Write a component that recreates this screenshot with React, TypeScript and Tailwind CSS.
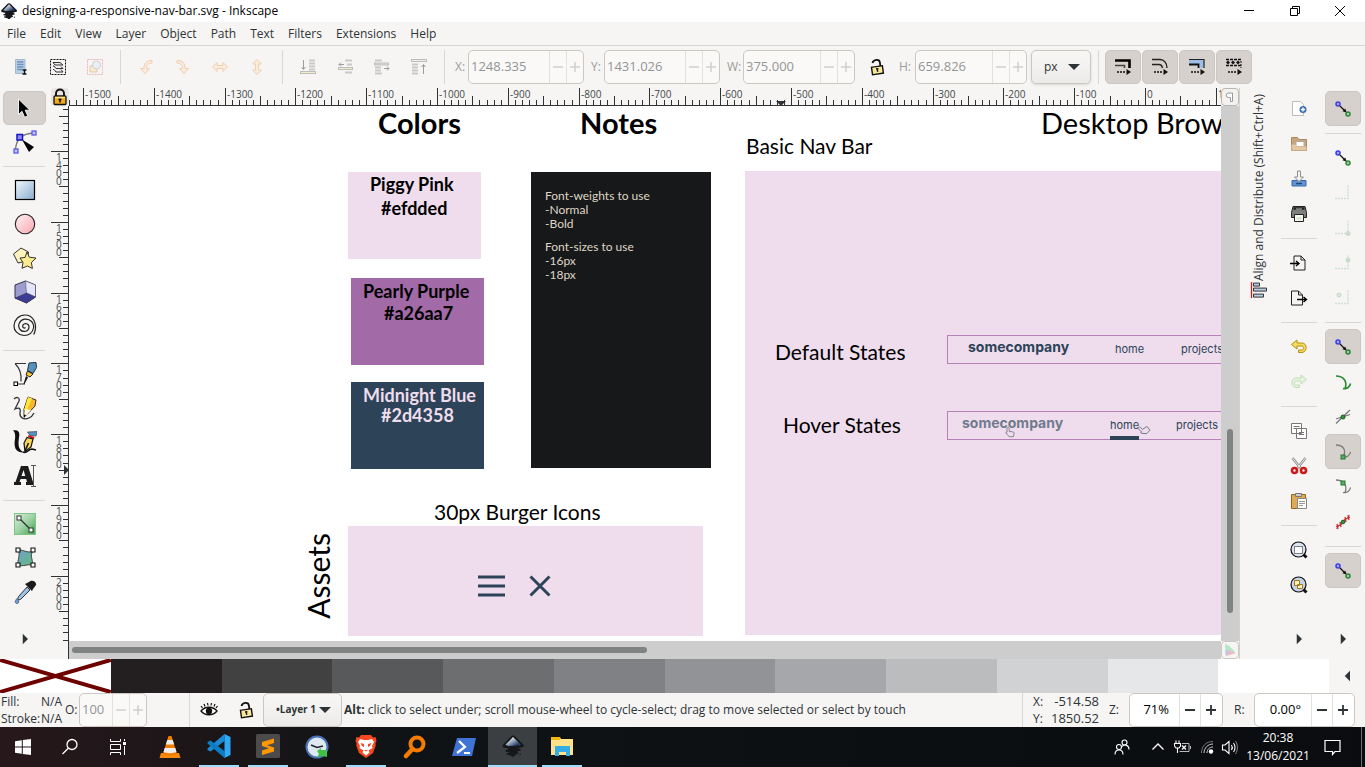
import type { ReactNode } from "react";

const ui = "font-['Open_Sans','Noto_Sans',sans-serif]";
const art = "font-['Lato','Noto_Sans',sans-serif]";
const brand = "font-['Inter','Open_Sans',sans-serif]";

type Kids = { children?: ReactNode };

function Icon({ size = 24, box = 24, children }: Kids & { size?: number; box?: number }) {
  return (
    <svg width={size} height={size} viewBox={`0 0 ${box} ${box}`} fill="none" aria-hidden="true" className="shrink-0">
      {children}
    </svg>
  );
}

/* ---------- shared icons ---------- */

function InkscapeLogo({ size }: { size: number }) {
  return (
    <Icon size={size}>
      <defs>
        <linearGradient id="ink" x1="0" y1="0" x2="1" y2="1">
          <stop offset="0.2" stopColor="#f4f6fa" />
          <stop offset="0.5" stopColor="#8d9bb0" />
          <stop offset="0.8" stopColor="#25406e" />
        </linearGradient>
      </defs>
      <path d="M12 1.500c.9 0 1.500.4 2.200 1.100l7.800 7.600c1.400 1.400.8 2.600-1 3.100-1.500.4-3 .4-3.200 1.100-.2.6 2.400 1 2.200 1.900-.2.900-3.500.600-3.700 1.400-.2.700 1.500 1 1 1.900-.4.800-2.100.300-2.600 1-.5.800-1.500 2.200-2.800 2.200-1.200 0-1.700-1-2.800-1.500-1-.5-2.800-.1-3-1.100-.1-.8 2-.900 1.900-1.700-.1-.8-3.500-.5-3.700-1.600-.2-1 3.100-1.200 2.900-2-.3-.8-3.800-.5-5.300-1.800-.8-.8-.4-1.900.4-2.700l7.500-7.700C10.500 1.900 11.100 1.500 12 1.500z" fill="#15171a" />
      <path d="M12 3l7.500 7.300c.8.8-.8 1.500-2.800 1-1.500-.4-2 .8-3.300.4-1.200-.4-1.700.9-2.900.3-1.200-.5-2.200.7-3.500-.1-1-.6-2.700-.4-2.300-1.300z" fill="url(#ink)" />
      <path d="M5.500 19.800l2 .4M18.500 20.500l1.500-.5M13 15.500h3" stroke="#15171a" strokeWidth="1.300" />
    </Icon>
  );
}

function Triangle({ dir }: { dir: "right" | "left" | "down" }) {
  const paths = { right: "M9 5l7 7-7 7z", left: "M16 5l-7 7 7 7z", down: "M4 8h16l-8 8z" };
  return (
    <Icon size={18}>
      <path d={paths[dir]} fill="#2e3436" />
    </Icon>
  );
}

function Padlock({ open, gold }: { open?: boolean; gold?: boolean }) {
  return (
    <Icon size={18} box={18}>
      {open ? (
        <g transform="rotate(-8 9 9)">
          <path d="M5 4.500C6.500 1 12.500 1 12.500 5v4" stroke="#111" strokeWidth="1.800" />
          <rect x="3.500" y="8.500" width="11" height="7.500" fill="#f8e89a" stroke="#111" strokeWidth="1.400" />
          <path d="M9 10v4M7.800 11h2.400" stroke="#222" strokeWidth="1.500" />
        </g>
      ) : (
        <g>
          <path d="M5 8V5.500a4 4 0 018 0V8" stroke="#111" strokeWidth="1.900" />
          <rect x="3" y="8" width="12" height="8.500" rx="1" fill={gold ? "#f0a91c" : "#eee"} stroke="#111" strokeWidth="1.300" />
          <path d="M4 9.500h10" stroke="#ffe59a" strokeWidth="1.500" />
          <path d="M9 10.500v4M7.500 11.500h3" stroke="#111" strokeWidth="1.500" />
        </g>
      )}
    </Icon>
  );
}

/* ---------- top tool bar icons ---------- */

const selectIcons: ReactNode[] = [
  <Icon key="all" size={18} box={18}>
    <path d="M3.500 1.500h9.500v14H3.500z" fill="#b9d0e8" stroke="#a9b9c9" />
    <path d="M5 4h6.500M5 6.500h6.500M5 9h6.500M5 11.500h5" stroke="#6f93ba" strokeWidth="1.500" />
    <path d="M10.500 12h4M10.500 16h4M12.500 12.500v3" stroke="#111" strokeWidth="1.300" />
  </Icon>,
  <Icon key="layers" size={18} box={18}>
    <rect x="1.500" y="1.500" width="15" height="15" stroke="#111" strokeDasharray="2 1" />
    <path d="M4 4.500h7l3 2.500H6zM4 8h1l2 2.500h7L12 8.500M4 11.500h1l2 2.500h7l-2-2.500" fill="#eee" stroke="#333" />
  </Icon>,
  <Icon key="none" size={18} box={18}>
    <rect x="1.500" y="1.500" width="15" height="15" stroke="#efb4b4" strokeDasharray="2 1" />
    <path d="M4 8h7v6H4z" fill="#f8ecd0" stroke="#dfc9a9" />
    <circle cx="10.500" cy="7" r="4" fill="#eceff3" stroke="#ccd0d4" />
  </Icon>,
];

function Orange({ d }: { d: string }) {
  return (
    <Icon size={18} box={18}>
      <path d={d} fill="#faebdd" stroke="#f0ceb0" strokeLinejoin="round" />
    </Icon>
  );
}

const turnIcons: ReactNode[] = [
  <Orange key="l" d="M15 2.500c-6 0-8 3-8 8H3.500L8 15.500l4.500-5H9.500c0-3 1-5 5.500-5.500z" />,
  <Orange key="r" d="M3 2.500c6 0 8 3 8 8h3.500L10 15.500l-4.500-5h3C8.500 7.500 7.500 5.500 3 5z" />,
  <Orange key="h" d="M1.500 9L6 4.500v3h6v-3L16.500 9 12 13.500v-3H6v3z" />,
  <Orange key="v" d="M9 1.500L4.500 6h3v6h-3L9 16.500l4.500-4.500h-3V6h3z" />,
];

const raiseIcons: ReactNode[] = [
  <Icon key="a" size={18} box={18}>
    <path d="M4.500 2v9M2.500 9l2 2.500L6.500 9" stroke="#9c9c9a" />
    <path d="M10 2.500h6M10 5.500h6M10 8.500h6M10 11.500h6" stroke="#c9c9c7" strokeWidth="2" />
    <rect x="1.500" y="13.500" width="15" height="2" fill="#f2ecc8" stroke="#bdbdb9" />
  </Icon>,
  <Icon key="b" size={18} box={18}>
    <path d="M3 6.500h5M5 4.500l-2 2 2 2" stroke="#9c9c9a" />
    <path d="M9 2.500h7M11 6.500h5M9 14.500h7" stroke="#c9c9c7" strokeWidth="2" />
    <rect x="2.500" y="9.500" width="14" height="2" fill="#f2ecc8" stroke="#bdbdb9" />
  </Icon>,
  <Icon key="c" size={18} box={18}>
    <path d="M11 10.500h5M14 8.500l2 2-2 2" stroke="#9c9c9a" />
    <path d="M2 2.500h7M2 9.500h6M2 12.500h6M2 15.500h7" stroke="#c9c9c7" strokeWidth="2" />
    <rect x="1.500" y="5" width="14" height="2" fill="#ddd" stroke="#bdbdb9" />
  </Icon>,
  <Icon key="d" size={18} box={18}>
    <path d="M13.500 16V7M11.500 9l2-2.500 2 2.500" stroke="#9c9c9a" />
    <path d="M2 6.500h6M2 9.500h6M2 12.500h6M2 15.500h6" stroke="#c9c9c7" strokeWidth="2" />
    <rect x="1.500" y="1.500" width="15" height="2" fill="#eee" stroke="#bdbdb9" />
  </Icon>,
];

const affectIcons: { name: string; icon: ReactNode }[] = [
  {
    name: "Scale stroke width",
    icon: (
      <g>
        <path d="M1 2.500h14.500V10" stroke="#000" strokeWidth="2.600" />
        <path d="M1 7.500h9.500V10" stroke="#444" strokeWidth="1.600" />
      </g>
    ),
  },
  {
    name: "Scale rounded corners",
    icon: (
      <g stroke="#222" strokeWidth="1.400">
        <path d="M1 1.500h8c4 0 7 3.500 7 8.500" />
        <path d="M1 6.500h7c2 0 3 1 3.500 3.500" />
      </g>
    ),
  },
  {
    name: "Move gradients",
    icon: (
      <g>
        <path d="M1 2h15v8h-5V7H1z" fill="#9dbfe6" />
        <path d="M1 1.500h15V10" stroke="#222" strokeWidth="1.200" />
        <path d="M1 6.500h9.500V10" stroke="#111" strokeWidth="1.800" />
      </g>
    ),
  },
  {
    name: "Move patterns",
    icon: (
      <g>
        <path d="M1 1.500h16M1 7.500h16" stroke="#111" strokeWidth="1.400" strokeDasharray="3 1" />
        <path d="M3 2.500L5 4.500 3 6.500 1 4.500zM8 2.500l2 2-2 2-2-2zM13 2.500l2 2-2 2-2-2z" fill="#111" />
        <path d="M16 3v7" stroke="#111" strokeDasharray="2 1" />
      </g>
    ),
  },
];

/* ---------- left tool box ---------- */

const tools: ({ name: string; icon: ReactNode } | null)[] = [
  {
    name: "Select",
    icon: <path d="M5.500 3v15.500L9 15.300l2.600 6 3.200-1.400-2.600-5.700h4.700z" fill="#000" stroke="#fff" strokeWidth=".9" />,
  },
  {
    name: "Edit nodes",
    icon: (
      <g>
        <path d="M2.500 21C2.500 10 8 3.500 21 3" stroke="#777" strokeWidth="1.300" />
        <rect x="4" y="4.500" width="5.500" height="5.500" fill="#8c8cf5" stroke="#1414c8" strokeWidth="1.500" />
        <rect x="19" y="1" width="4" height="4" fill="#c4c4fa" stroke="#5a5ae6" strokeWidth="1.300" />
        <rect x="1" y="19" width="4" height="4" fill="#c4c4fa" stroke="#5a5ae6" strokeWidth="1.300" />
        <path d="M9 9.500l12 7.500-5 5z" fill="#000" />
      </g>
    ),
  },
  null,
  {
    name: "Rectangle",
    icon: (
      <g>
        <defs>
          <linearGradient id="gr" x1="0" y1="0" x2="1" y2="1">
            <stop stopColor="#f2f7fc" />
            <stop offset="1" stopColor="#88add2" />
          </linearGradient>
        </defs>
        <rect x="2.500" y="2.500" width="19" height="19" fill="url(#gr)" stroke="#000" strokeWidth="1.200" />
      </g>
    ),
  },
  {
    name: "Ellipse",
    icon: (
      <g>
        <defs>
          <linearGradient id="gc" x1="0" y1="0" x2="1" y2="1">
            <stop stopColor="#fff5f6" />
            <stop offset="1" stopColor="#f9a5ae" />
          </linearGradient>
        </defs>
        <circle cx="12" cy="12" r="9.700" fill="url(#gc)" stroke="#222" strokeWidth="1.100" />
      </g>
    ),
  },
  {
    name: "Star",
    icon: (
      <g strokeLinejoin="round" stroke="#333">
        <path d="M8 2l7.500 4-1.500 9-9 2-4.500-9z" fill="#fdf3bd" />
        <path d="M14 6l2.300 5.200 6.700.800-4.600 4.500 1 6-5-2.500-5.400 2.300 1-5.800-3-4.500 5-.5z" fill="#fbec8f" />
      </g>
    ),
  },
  {
    name: "3D box",
    icon: (
      <g stroke="#334" strokeLinejoin="round">
        <path d="M12.500 1l10 4v12l-9 6-11.500-5V5z" fill="#9c9ccf" />
        <path d="M12.500 1l10 4v12l-9-4z" fill="#e4e4fb" strokeWidth=".4" />
        <path d="M2 18l11.500-5 9 4-9 6z" fill="#3c3c94" strokeWidth=".4" />
      </g>
    ),
  },
  {
    name: "Spiral",
    icon: (
      <path
        d="M12.500 13.500c-1.500 1.500-3.500-.500-2.500-2.500 1.500-2.500 6-1.500 6 2 0 4.500-6 6-9 2.500-3-4-.500-9.500 4.500-10.300 6-.700 10 4 9 8.800-1 5-5 7.500-9.500 7.500C4.500 21 .8 16.500 1 11.500 1.500 5.500 6 1 12 1c8 0 12 8 10 16-.4 1.500-.8 2.500-1.300 3.500"
        stroke="#222"
        strokeWidth="1.200"
      />
    ),
  },
  null,
  {
    name: "Pen",
    icon: (
      <g>
        <path d="M2 1.500h11M2 1.500c4 4 7 9 6 18M3 22h9" stroke="#333" strokeWidth="1.200" />
        <rect x="1" y="20" width="3.500" height="3.500" fill="#fff" stroke="#000" />
        <path d="M16 1l7-.5.5 5-3.500 6-5.500-3z" fill="#5793bd" stroke="#234" />
        <path d="M14.500 9l5.500 3-3 3-4-2z" fill="#f5c433" stroke="#222" />
        <path d="M13 14l2 1.500L11.500 22h-1z" fill="#111" />
      </g>
    ),
  },
  {
    name: "Pencil",
    icon: (
      <g>
        <path d="M1 3c3-3 6-1 5 2l-4 8c4-2 6-1 5 4-.5 5 4 7 9 5 3-1 4-3 5-5" stroke="#333" strokeWidth="1.300" />
        <path d="M15 1l8 3-1 6-7.500 8L11 21V13z" fill="#f9b62b" stroke="#333" />
        <path d="M15 1l4 1.500L14 14l-3 0z" fill="#ffe83a" />
        <path d="M12 13l6 1-4 4.500L11 21z" fill="#fff8e0" />
        <path d="M11 18.500l2 .5-2 3z" fill="#000" />
      </g>
    ),
  },
  {
    name: "Calligraphy",
    icon: (
      <g>
        <path d="M0 .5c6-1 7 2 6 7-1 7-1 12 5 15C1 23 1 15 2 9c.5-4 0-7-2-8.500z" fill="#111" />
        <path d="M10 22c4 2 5-3 9-3l4 1" stroke="#111" strokeWidth="1.600" />
        <path d="M14.500 2L24 1.500 23 6l-6-.5z" fill="#5793bd" stroke="#234" strokeWidth=".6" />
        <path d="M15.500 5l6 2-.6 2-6-2z" fill="#d21717" />
        <path d="M14 7.500l6 1.500-2 8-6 4.500L11 13z" fill="#f9d85a" stroke="#111" strokeWidth="1.200" />
        <path d="M12 21l3.500-8" stroke="#111" strokeWidth="1.500" />
      </g>
    ),
  },
  {
    name: "Text",
    icon: (
      <g>
        <path
          d="M1 18h1.500L8 2h7l5 16h1v3h-8v-3h1l-.8-3H7.500l-1 3H8v3H1zM8.500 12h3.800l-1.800-6z"
          fill="#1c1c1c"
          fillRule="evenodd"
        />
        <path d="M18 1.500h5M18 22.500h5M20.500 1.500v21" stroke="#555" />
      </g>
    ),
  },
  null,
  {
    name: "Gradient",
    icon: (
      <g>
        <defs>
          <linearGradient id="gg" x1="0" y1="0" x2="1" y2="1">
            <stop stopColor="#d9f0dc" />
            <stop offset=".5" stopColor="#9fd2a6" />
            <stop offset=".9" stopColor="#4fae5c" />
          </linearGradient>
        </defs>
        <rect x="1.500" y="1.500" width="21" height="21" fill="url(#gg)" stroke="#7fc489" />
        <path d="M7 7l10 10" stroke="#333" strokeWidth="1.300" />
        <rect x="4" y="4" width="4" height="4" fill="#fff" stroke="#333" />
        <rect x="16" y="16" width="4" height="4" fill="#fff" stroke="#333" />
      </g>
    ),
  },
  {
    name: "Mesh",
    icon: (
      <g>
        <defs>
          <linearGradient id="gm" x1="0" y1="0" x2="1" y2="1">
            <stop stopColor="#6da2d0" />
            <stop offset="1" stopColor="#64bb7a" />
          </linearGradient>
        </defs>
        <path d="M5 4c5-1 9 4 15 1-4 5 1 10-1 14-5-1-9 2-14 0-1-5 3-10 0-15z" fill="url(#gm)" stroke="#444" />
        <path d="M3 2h4v4H3zM18 2h4v4h-4zM3 17h4v4H3zM18 17h4v4h-4z" fill="#fff" stroke="#111" strokeWidth="1.100" />
      </g>
    ),
  },
  {
    name: "Dropper",
    icon: (
      <g>
        <path d="M16 2c3-3 8 0 7 3l-3 4-1 2-7-7 2-1z" fill="#1b1b1b" />
        <path d="M14 7l3 3L8 19c-1 1-3 1-3 0s0-2 1-3z" fill="#9dc0e4" stroke="#333" />
        <path d="M4 18.500c2 2 2.500 5 0 5s-2-3 0-5z" fill="#6b9fd4" stroke="#346" strokeWidth=".7" />
      </g>
    ),
  },
];

/* ---------- command column ---------- */

const page = "M4 2h7l4 4v10H4z";

const commands: ({ name: string; icon: ReactNode } | null)[] = [
  {
    name: "New document",
    icon: (
      <g>
        <path d="M2.500 1.500h8l3 3v11h-11z" fill="#fff" stroke="#bdbdba" />
        <circle cx="13" cy="9.500" r="3.500" fill="#3f6fae" />
        <path d="M13 7.500v4M11 9.500h4" stroke="#fff" strokeWidth="1.300" />
      </g>
    ),
  },
  {
    name: "Open",
    icon: (
      <g>
        <path d="M1.500 2.500h6l1.500 2h7.500v11h-15z" fill="#c7a67c" stroke="#a98a62" />
        <path d="M6 6.500h8v5H6z" fill="#fff" stroke="#b3ab9f" />
        <path d="M1.500 9.500h4l1.500 2h9.500v4h-15z" fill="#e3c8a2" />
      </g>
    ),
  },
  {
    name: "Save",
    icon: (
      <g>
        <path d="M2 10.500h14v5.500H2z" fill="#5f95d4" stroke="#3a68a6" />
        <path d="M7.500 1h3v6h3L9 11.500 4.500 7h3z" fill="#f4f4f4" stroke="#8e8e8e" />
        <path d="M6 13.500h6" stroke="#24497e" strokeWidth="1.500" />
      </g>
    ),
  },
  {
    name: "Print",
    icon: (
      <g>
        <path d="M3 1.500h12l1.500 6v5h-15v-5z" fill="#7c807d" stroke="#222" />
        <path d="M3.500 3.500h11" stroke="#222" strokeWidth="2.500" />
        <path d="M6 4h6" stroke="#bbb" />
        <path d="M4.500 9.500h9v7h-9z" fill="#f7f7f2" stroke="#222" />
        <path d="M6.500 13.500h5" stroke="#cfe5c2" strokeWidth="2" />
      </g>
    ),
  },
  null,
  {
    name: "Import",
    icon: (
      <g>
        <path d={page} fill="#f4f4f2" stroke="#222" />
        <path d="M11 2v4h4" stroke="#222" />
        <path d="M0 9.500h8M6 7l3 2.500L6 12" stroke="#000" strokeWidth="1.400" />
      </g>
    ),
  },
  {
    name: "Export",
    icon: (
      <g>
        <path d="M1.500 2h7l4 4v10h-11z" fill="#f4f4f2" stroke="#222" />
        <path d="M8.500 2v4h4" stroke="#222" />
        <path d="M7 10.500h9M13.500 8l3 2.500-3 2.500" stroke="#000" strokeWidth="1.400" />
      </g>
    ),
  },
  null,
  {
    name: "Undo",
    icon: <path d="M1.500 6.500L7 2v3h5c5.500 0 5.500 9 0 9.500H8.500V12H12c2 0 2-4 0-4H7v3z" fill="#f6dc5b" stroke="#b98f12" strokeLinejoin="round" />,
  },
  {
    name: "Redo",
    icon: <path d="M16.500 6.500L11 2v3H6c-5.500 0-5.500 9 0 9.500h3.500V12H6C4 12 4 8 6 8h5v3z" fill="#e6f3de" stroke="#c3ddb6" strokeLinejoin="round" />,
  },
  null,
  {
    name: "Copy",
    icon: (
      <g stroke="#777">
        <path d="M1.500 1.500h10v10h-10zM6.500 6.500h10v10h-10z" fill="#fff" />
        <path d="M3.500 4.500h6M3.500 6.500h3M9 10.500h5M9 12.500h5" />
      </g>
    ),
  },
  {
    name: "Cut",
    icon: (
      <g>
        <path d="M2.500 1l8 10M15.500 1l-8 10" stroke="#888" strokeWidth="2.400" />
        <path d="M2.500 1l8 10M15.500 1l-8 10" stroke="#eee" strokeWidth="1" />
        <circle cx="4.500" cy="13.500" r="2.500" stroke="#cc1a1a" strokeWidth="2.600" />
        <circle cx="13.500" cy="13.500" r="2.500" stroke="#cc1a1a" strokeWidth="2.600" />
      </g>
    ),
  },
  {
    name: "Paste",
    icon: (
      <g>
        <path d="M1.500 2.500h14v14h-14z" fill="#e3aa56" stroke="#95651b" />
        <path d="M5.500 1.500h6v3h-6z" fill="#ccc" stroke="#777" />
        <path d="M7.500 6.500h9v10h-9z" fill="#fff" stroke="#888" />
        <path d="M9 9.500h6M9 11.500h6M9 13.500h4" stroke="#999" />
      </g>
    ),
  },
  null,
  {
    name: "Zoom selection",
    icon: (
      <g>
        <circle cx="8.500" cy="8.500" r="7.500" fill="#dbe5f2" stroke="#111" strokeWidth="1.200" />
        <rect x="4.500" y="5.500" width="8" height="7" fill="#fff" stroke="#111" strokeDasharray="1 1" />
        <path d="M13.500 13.500l3 3" stroke="#111" strokeWidth="3" />
      </g>
    ),
  },
  {
    name: "Zoom drawing",
    icon: (
      <g>
        <circle cx="8.500" cy="8.500" r="7.500" fill="#c5d3ea" stroke="#111" strokeWidth="1.200" />
        <path d="M4.500 4.500h5v5h-5zM7.500 8.500h5v4h-5z" fill="#fff3c4" stroke="#a67a1c" />
        <path d="M13.500 13.500l3 3" stroke="#111" strokeWidth="3" />
      </g>
    ),
  },
];

/* ---------- snap column ---------- */

const nodePair = (
  <g>
    <circle cx="4" cy="4" r="2" fill="#a6a6fa" stroke="#3b3bea" strokeWidth="1.500" />
    <circle cx="14" cy="14" r="2" fill="#a9c8ab" stroke="#2f8436" strokeWidth="1.500" />
    <path d="M6 6l5 5" stroke="#111" strokeWidth="1.300" />
    <path d="M12.500 12.500l-4-1.200 2.800-2.800z" fill="#111" />
  </g>
);
const faintCorner = <path d="M1 14.500h13V1" stroke="#cfe0d3" strokeWidth="1.500" strokeDasharray="2 1" />;

const snaps: ({ name: string; icon: ReactNode; on?: boolean } | null)[] = [
  { name: "Enable snapping", icon: nodePair, on: true },
  null,
  { name: "Snap bounding boxes", icon: nodePair },
  { name: "Snap box edges", icon: faintCorner },
  {
    name: "Snap box corners",
    icon: (
      <g>
        {faintCorner}
        <circle cx="14" cy="14.500" r="2.500" fill="#cbdccf" />
      </g>
    ),
  },
  {
    name: "Snap edge midpoints",
    icon: (
      <g>
        {faintCorner}
        <circle cx="14" cy="6" r="2.500" fill="#cbdccf" />
      </g>
    ),
  },
  {
    name: "Snap box centers",
    icon: (
      <g>
        {faintCorner}
        <circle cx="5" cy="6" r="2" fill="#dbe8de" stroke="#c3d8c8" />
      </g>
    ),
  },
  null,
  { name: "Snap nodes", icon: nodePair, on: true },
  {
    name: "Snap to paths",
    icon: <path d="M2 3c7 0 12 5 9 12.500M9 15.500c4 1 7-2 7.500-5" stroke="#2b8a33" strokeWidth="1.700" />,
  },
  {
    name: "Snap to intersections",
    icon: (
      <g>
        <path d="M2 15.500L16 2M2 11l14-4.500" stroke="#777" strokeWidth="1.200" />
        <circle cx="9" cy="9" r="2" fill="#2e9a3c" stroke="#155c1f" />
      </g>
    ),
  },
  {
    name: "Snap to cusp nodes",
    on: true,
    icon: (
      <g>
        <path d="M2 2c7 0 11 5 7 12M9 14c4 1 7-2 7.500-5" stroke="#7b7b79" strokeWidth="1.300" />
        <rect x="7" y="12" width="4" height="4" fill="#5cab68" stroke="#217a2f" />
      </g>
    ),
  },
  {
    name: "Snap to smooth nodes",
    icon: (
      <g>
        <path d="M2 2c7 0 12 5 9 12.500M9 14.500c4 1 7-2 7.500-5" stroke="#7b7b79" strokeWidth="1.300" />
        <rect x="7" y="3" width="4" height="4" fill="#5cab68" stroke="#217a2f" />
      </g>
    ),
  },
  {
    name: "Snap to line midpoints",
    icon: (
      <g>
        <path d="M2 16L16 2" stroke="#999" />
        <path d="M3 11l1 5M6 9l1 5M11 4l1 5M14 2l1 5M2 14l6-3M10 7l6-3" stroke="#c92c2c" strokeWidth="1.300" />
        <circle cx="9" cy="9" r="1.800" fill="#2e9a3c" stroke="#155c1f" />
      </g>
    ),
  },
  null,
  { name: "Snap other points", icon: nodePair, on: true },
];

/* ---------- building blocks ---------- */

function HLine() {
  return (
    <div className="flex h-3.5 items-center">
      <div className="h-px w-full bg-[#d9d7d5]" />
    </div>
  );
}

function VLine() {
  return <div className="ml-[7px] mr-1.5 h-[34px] w-px shrink-0 bg-[#d9d7d5]" />;
}

function Spin({ id, label, value, wide }: { id: string; label: string; value: string; wide?: boolean }) {
  return (
    <div className="flex items-center">
      <label htmlFor={id} className={`text-xs text-[#9b9c9b] ${wide ? "w-[13px]" : "w-4"}`}>
        {label}
      </label>
      <div
        className={`flex h-[34px] overflow-hidden rounded-[5px] border border-[#cdc7c2] bg-[#faf9f8] ${wide ? "w-[116px]" : "w-28"}`}
      >
        <input
          id={id}
          disabled
          defaultValue={value}
          className="w-0 min-w-0 grow bg-transparent pl-0.5 text-[13px] text-[#929595]"
        />
        <button disabled aria-label={`Decrease ${label}`} className="w-[17px] border-l border-[#e3e1df]">
          <Icon size={16} box={16}>
            <path d="M3 8h10" stroke="#cfcfcd" strokeWidth="1.500" />
          </Icon>
        </button>
        <button disabled aria-label={`Increase ${label}`} className="w-[17px] border-l border-[#e3e1df]">
          <Icon size={16} box={16}>
            <path d="M3 8h10M8 3v10" stroke="#cfcfcd" strokeWidth="1.500" />
          </Icon>
        </button>
      </div>
    </div>
  );
}

function ZoomSpin({ id, label, value, width }: { id: string; label: string; value: string; width: string }) {
  return (
    <div className="flex items-center">
      <label htmlFor={id} className="w-5 text-xs">
        {label}
      </label>
      <div className={`flex h-[34px] overflow-hidden rounded-[5px] border border-[#cdc7c2] bg-white text-black ${width}`}>
        <input id={id} defaultValue={value} className="w-0 min-w-0 grow bg-transparent pr-2.5 text-right text-[13px]" />
        <button aria-label={`Decrease ${label}`} className="w-[21px] border-l border-[#e3e1df] pl-0.5">
          <Icon size={16} box={16}>
            <path d="M3 8h10" stroke="#2e3436" strokeWidth="1.800" />
          </Icon>
        </button>
        <button aria-label={`Increase ${label}`} className="w-[22px] border-l border-[#e3e1df] pl-0.5">
          <Icon size={16} box={16}>
            <path d="M3 8h10M8 3v10" stroke="#2e3436" strokeWidth="1.800" />
          </Icon>
        </button>
      </div>
    </div>
  );
}

/* ---------- rulers: 100 user units are 70.8 pixels at 71 % zoom ---------- */

const STEP = 7.08;

function TopRuler() {
  const ticks: { x: number; n: number }[] = [];
  for (let n = -152; n <= 12; n++) ticks.push({ n, x: Math.round(1076 + n * STEP) + 0.5 });
  return (
    <svg width="100%" height="18" className="block" aria-label="Horizontal ruler">
      {ticks.map(({ x, n }) => (
        <path key={n} d={`M${x} ${n % 10 === 0 ? 0 : n % 5 === 0 ? 8 : 12}V17`} stroke="#2e3436" />
      ))}
      {ticks
        .filter(({ n }) => n % 10 === 0)
        .map(({ x, n }) => (
          <text key={n} x={x + 1.5} y="10" fontSize="10" fill="#43484a">
            {n * 10}
          </text>
        ))}
      <path d="M0 17.500H3000" stroke="#2e3436" />
      <path d="M707 13h10l-5 5z" fill="#2e3436" />
    </svg>
  );
}

function SideRuler() {
  const ticks: { y: number; n: number }[] = [];
  for (let n = 134; n <= 209; n++) ticks.push({ n, y: Math.round(45 + (n - 140) * STEP) + 0.5 });
  return (
    <svg width="18" height="100%" className="block" aria-label="Vertical ruler">
      {ticks.map(({ y, n }) => (
        <path key={n} d={`M${n % 10 === 0 ? 0 : n % 5 === 0 ? 8 : 12} ${y}H17`} stroke="#2e3436" />
      ))}
      {ticks
        .filter(({ n }) => n % 10 === 0)
        .map(({ y, n }) => (
          <text key={n} fontSize="10" fill="#43484a">
            {String(n * 10)
              .split("")
              .map((digit, i) => (
                <tspan key={i} x="5" y={y + 9 + i * 8}>
                  {digit}
                </tspan>
              ))}
          </text>
        ))}
      <path d="M17.500 0V3000" stroke="#2e3436" />
      <path d="M13 359v10l5-5z" fill="#2e3436" />
    </svg>
  );
}

/* ---------- drawing on the canvas ---------- */

function Hand() {
  return (
    <path
      d="M3 .8c1 0 1.200.7 1.200 1.500v2.500l4 .7c.9.200 1 1 .8 2l-.6 2.700H4.200L1 6.500c-.4-.8.5-1.200 1-.7V2.300C2 1.500 2.200.8 3 .8z"
      fill="#efdded"
      stroke="#66717f"
      strokeWidth=".8"
    />
  );
}

function Artwork() {
  return (
    <div className={`absolute inset-0 whitespace-nowrap leading-none text-black ${art}`}>
      <div className="absolute left-[309px] top-[2px] text-[29px] font-bold">Colors</div>
      <div className="absolute left-[511px] top-[2px] text-[29px] font-bold">Notes</div>
      <div className="absolute left-[972px] top-[2px] text-[29px]">Desktop Browser</div>

      <div className="absolute left-[279px] top-[66px] h-[87px] w-[133px] bg-[#efdded]" />
      <div className="absolute left-[301px] top-[69px] text-[18px] font-bold">Piggy Pink</div>
      <div className="absolute left-[312px] top-[93px] text-[18px] font-bold">#efdded</div>

      <div className="absolute left-[282px] top-[172px] h-[87px] w-[133px] bg-[#a26aa7]" />
      <div className="absolute left-[294px] top-[176px] text-[18px] font-bold">Pearly Purple</div>
      <div className="absolute left-[315px] top-[198px] text-[18px] font-bold">#a26aa7</div>

      <div className="absolute left-[282px] top-[276px] h-[87px] w-[133px] bg-[#2d4358]" />
      <div className="absolute left-[294px] top-[280px] text-[18px] font-bold text-[#efdded]">Midnight Blue</div>
      <div className="absolute left-[312px] top-[300px] text-[18px] font-bold text-[#efdded]">#2d4358</div>

      <div className="absolute left-[462px] top-[66px] h-[296px] w-[180px] bg-[#17181a] pl-3.5 pt-[17px] text-xs leading-[14px] text-[#dfd6c4]">
        <p>Font-weights to use</p>
        <p>-Normal</p>
        <p>-Bold</p>
        <p className="mt-[9px]">Font-sizes to use</p>
        <p>-16px</p>
        <p>-18px</p>
      </div>

      <div className="absolute left-[365px] top-[395px] text-[21px]">30px Burger Icons</div>
      <div className="absolute left-[234px] top-[427px] text-[30px] [writing-mode:vertical-rl]">
        <span className="inline-block rotate-180">Assets</span>
      </div>
      <div className="absolute left-[279px] top-[420px] flex h-[110px] w-[355px] items-center gap-6 bg-[#efdded] pl-[130px] pt-[10px]">
        <svg width="27" height="22" viewBox="0 0 27 22" aria-hidden="true">
          <path d="M0 2h27M0 11h27M0 20h27" stroke="#2d4358" strokeWidth="3" />
        </svg>
        <svg width="22" height="22" viewBox="0 0 22 22" aria-hidden="true">
          <path d="M1.500 1.500l19 19M20.500 1.500l-19 19" stroke="#2d4358" strokeWidth="3" />
        </svg>
      </div>

      <div className="absolute left-[677px] top-[29px] text-[21px]">Basic Nav Bar</div>
      <div className="absolute left-[676px] right-0 top-[65px] h-[464px] bg-[#efdded]" />
      <div className="absolute left-[706px] top-[235px] text-[21px]">Default States</div>
      <div className="absolute left-[714px] top-[308px] text-[21px]">Hover States</div>

      <div className={`absolute left-[878px] top-[229px] h-[29px] w-[900px] border border-[#b482b8] text-[#2d4358] ${brand}`}>
        <div className="absolute left-[20px] top-[4px] text-sm leading-none font-bold">somecompany</div>
        <div className="absolute left-[167px] top-[8px] text-[11px] leading-none">home</div>
        <div className="absolute left-[233px] top-[8px] text-[11px] leading-none">projects</div>
      </div>
      <div className={`absolute left-[878px] top-[305px] h-[29px] w-[900px] border border-[#b482b8] text-[#2d4358] ${brand}`}>
        <div className="absolute left-[14px] top-[4px] text-sm leading-none font-bold text-[#6f7b8d]">somecompany</div>
        <div className="absolute left-[162px] top-[8px] text-[11px] leading-none">home</div>
        <div className="absolute left-[228px] top-[8px] text-[11px] leading-none">projects</div>
        <div className="absolute left-[162px] top-[24px] h-1 w-[29px] bg-[#2d4358]" />
        <svg width="10" height="12" viewBox="0 0 10 11" className="absolute left-[57px] top-[14px]" aria-hidden="true">
          <Hand />
        </svg>
        <svg width="12" height="12" viewBox="0 0 11 11" className="absolute left-[190px] top-[11px] -rotate-45" aria-hidden="true">
          <Hand />
        </svg>
      </div>
    </div>
  );
}

/* ---------- task bar ---------- */

const apps: { name: string; icon: ReactNode; state?: "open" | "active" }[] = [
  {
    name: "VLC media player",
    icon: (
      <g>
        <path d="M3 18h18l1.500 5h-21z" fill="#f58a0b" />
        <path d="M10.500 1h3L19 19c-3 2-11 2-14 0z" fill="#f07d00" />
        <path d="M9.300 5h5.400l1.500 4.500H7.800zM6.700 13h10.600l1.200 4c-3 1.500-10 1.500-13 0z" fill="#f0eeec" />
      </g>
    ),
  },
  {
    name: "Visual Studio Code",
    state: "open",
    icon: (
      <g>
        <path d="M17.500 0v7L3.500 17.500.5 16v-1.500z" fill="#1a8ad6" />
        <path d="M.5 9.500V8l3-1.500L17.500 17v7z" fill="#0b7bc4" />
        <path d="M17.500 0l6 3v18l-6 3z" fill="#2fa8f5" />
      </g>
    ),
  },
  {
    name: "Sublime Text",
    state: "open",
    icon: (
      <g>
        <rect width="24" height="24" rx="1.500" fill="#4b4b4b" />
        <path d="M18 4.500V9l-7 2.200 7 2.200v4L6 21v-4.500l7-2.200-7-2.200v-4z" fill="#ff9800" />
      </g>
    ),
  },
  {
    name: "Clock",
    icon: (
      <g>
        <circle cx="12" cy="12" r="10.500" fill="#dfe8f0" stroke="#4a73b5" strokeWidth="2" />
        <path d="M6 10l6 2.500 6-1.500" stroke="#223" strokeWidth="1.500" />
        <path d="M12 16l4-3v2l6 0v7l-5-1-5 1 2-3z" fill="#42c046" />
      </g>
    ),
  },
  {
    name: "Brave",
    state: "open",
    icon: (
      <g>
        <path d="M7 1h10l2 2.500 2.500-.5 1 4-1 2 .2 2.500L19 19l-7 5-7-5-2.700-7.500L2.500 9l-1-2 1-4 2.500.5z" fill="#f8481f" />
        <path d="M6 5l4 1h4l4-1 2 3-2 4 .5 2-4 2.500 1 2-3.500 3-3.500-3 1-2-4-2.500L6 12 4 8z" fill="#fff" />
        <path d="M6.500 9l3.500 1v3l-2-1zM17.500 9L14 10v3l2-1zM10 16h4l-2 1.500z" fill="#f8481f" />
      </g>
    ),
  },
  {
    name: "Everything search",
    icon: (
      <g stroke="#f57c00">
        <circle cx="14" cy="9" r="6.500" strokeWidth="4" />
        <path d="M9.500 14L3 21" strokeWidth="4.500" strokeLinecap="round" />
      </g>
    ),
  },
  {
    name: "PowerShell",
    icon: (
      <g>
        <path d="M5 3h19l-4 18H0z" fill="#3f74d6" />
        <path d="M7 6l6 6-8 6M12 18h6" stroke="#fff" strokeWidth="2.200" />
      </g>
    ),
  },
  { name: "Inkscape", state: "active", icon: null },
  {
    name: "File Explorer",
    state: "open",
    icon: (
      <g>
        <path d="M1 3h9l1 2h12v16H1z" fill="#ffe28a" />
        <path d="M1 3h9v3H1z" fill="#f5b800" />
        <path d="M5 12h15v10h-4v-4H9v4H5z" fill="#35aee8" />
      </g>
    ),
  },
];

function TaskBar() {
  return (
    <footer className="flex h-10 shrink-0 items-stretch bg-gradient-to-r from-[#27181b] via-[#0f1315] via-30% to-[#0a0c0f] text-white">
      <button aria-label="Start" className="flex w-[46px] items-center justify-center">
        <Icon size={16} box={16}>
          <path d="M0 2.200l6.800-1v6.300H0zM7.800 1L16 0v7.500H7.800zM0 8.500h6.800v6.300L0 13.800zM7.800 8.500H16V16l-8.200-1z" fill="#fff" />
        </Icon>
      </button>
      <button aria-label="Search" className="flex w-12 items-center justify-center">
        <Icon size={18} box={18}>
          <circle cx="11" cy="6.500" r="5" stroke="#fff" strokeWidth="1.300" />
          <path d="M7.300 10.300L1.500 16" stroke="#fff" strokeWidth="1.300" />
        </Icon>
      </button>
      <button aria-label="Task view" className="flex w-12 items-center justify-center">
        <Icon size={18} box={18}>
          <path d="M1.500 1v2.500h10V1M1.500 17v-2.500h10V17M1.500 6.500h10v5h-10zM15.500 1v2M15.500 8v9" stroke="#fff" />
          <rect x="14" y="4" width="3" height="3" fill="#fff" />
        </Icon>
      </button>
      <div className="ml-[3px] flex">
        {apps.map((app) => (
          <button
            key={app.name}
            aria-label={app.name}
            className={`flex w-[49px] flex-col items-center justify-between ${app.state === "active" ? "bg-[#3b3f41]" : ""}`}
          >
            <span className="flex grow items-center">
              {app.state === "active" ? <InkscapeLogo size={24} /> : <Icon>{app.icon}</Icon>}
            </span>
            {app.state && <span className={`h-0.5 bg-[#9fdcf8] ${app.state === "active" ? "w-full" : "w-10"}`} />}
          </button>
        ))}
      </div>
      <div className="ml-auto flex items-center">
        <button aria-label="People" className="mr-5">
          <Icon size={16} box={16}>
            <g stroke="#fff" strokeWidth="1.100">
              <circle cx="10.500" cy="3.500" r="2.500" />
              <circle cx="5" cy="8" r="2.500" />
              <path d="M1 15.500c0-6 8-6 8 0M8 7.500c3-3 7-1 7 3" />
            </g>
          </Icon>
        </button>
        <button aria-label="Show hidden icons" className="mr-2">
          <Icon size={16} box={16}>
            <path d="M2.500 10.500L8 5l5.500 5.500" stroke="#fff" strokeWidth="1.300" />
          </Icon>
        </button>
        <button aria-label="Battery" className="mr-2">
          <Icon size={17} box={17}>
            <path d="M2 1.500v3M5 1.500v3M.5 4.500h6v2.500L5 9H2L.5 7zM3.500 9v5" stroke="#fff" strokeWidth="1.100" />
            <path d="M8 4.500h7v8H5.500M16.500 7v3" stroke="#bbb" />
            <path d="M8 6.500l4 4M12 6.500l-4 4" stroke="#fff" strokeWidth="1.300" />
          </Icon>
        </button>
        <button aria-label="Network" className="mr-1.5">
          <Icon size={16} box={16}>
            <path d="M2.500 14C2.500 7 7 2.500 14 2.500" stroke="#777" />
            <path d="M5 14c0-5 4-9 9-9M8 14c0-3.500 2.500-6 6-6" stroke="#ccc" />
            <circle cx="12" cy="12.500" r="2.200" fill="#fff" />
          </Icon>
        </button>
        <button aria-label="Volume" className="mr-2.5">
          <Icon size={17} box={17}>
            <path d="M1.500 6h2.500l4-3.500v12L4 11H1.500zM10.500 6c1 1.500 1 3.500 0 5M12.500 4c2 2.500 2 6.500 0 9" stroke="#fff" strokeWidth="1.100" />
            <path d="M14.500 2c2.500 3.500 2.500 9.500 0 13" stroke="#888" />
          </Icon>
        </button>
        <div className="flex w-[60px] flex-col items-center text-xs leading-[18px] whitespace-nowrap">
          <span>20:38</span>
          <span>13/06/2021</span>
        </div>
        <button aria-label="Notifications" className="ml-4 mr-5">
          <Icon size={17} box={17}>
            <path d="M1 1.500h15v11H11l-2.500 3v-3H1z" stroke="#fff" strokeWidth="1.200" />
          </Icon>
        </button>
        <div className="mr-[3px] h-10 w-px bg-[#6a6d70]" />
      </div>
    </footer>
  );
}

/* ---------- page ---------- */

const menus = ["File", "Edit", "View", "Layer", "Object", "Path", "Text", "Filters", "Extensions", "Help"];

const greys = [
  "bg-[#231f20]",
  "bg-[#414141]",
  "bg-[#58595b]",
  "bg-[#6d6e6f]",
  "bg-[#808184]",
  "bg-[#929397]",
  "bg-[#a6a7ab]",
  "bg-[#bbbcbe]",
  "bg-[#d1d2d4]",
  "bg-[#e6e7e9]",
  "bg-white",
];

function ToolGroup({ icons, name }: { icons: ReactNode[]; name: string }) {
  return (
    <div className="flex" role="group" aria-label={name}>
      {icons.map((icon, i) => (
        <button key={i} aria-label={`${name} ${i + 1}`} className="flex h-[34px] w-[37px] items-center justify-center">
          {icon}
        </button>
      ))}
    </div>
  );
}

export default function App() {
  return (
    <div className={`flex h-screen flex-col overflow-hidden bg-[#f6f5f4] text-[#2e3436] ${ui}`}>
      <header className="flex h-[22px] shrink-0 items-center bg-white text-black">
        <InkscapeLogo size={18} />
        <h1 className="ml-1 text-xs">designing-a-responsive-nav-bar.svg - Inkscape</h1>
        <div className="ml-auto flex">
          <button aria-label="Minimize" className="flex w-[46px] justify-center">
            <Icon size={12} box={12}>
              <path d="M1 5.500h10" stroke="#000" />
            </Icon>
          </button>
          <button aria-label="Restore" className="flex w-[45px] justify-center">
            <Icon size={12} box={12}>
              <path d="M1.500 3.500h7v7h-7zM3.500 3V1.500h7v7H9" stroke="#000" />
            </Icon>
          </button>
          <button aria-label="Close" className="mr-0.5 flex w-[46px] justify-center">
            <Icon size={12} box={12}>
              <path d="M1 1l10 10M11 1L1 11" stroke="#000" />
            </Icon>
          </button>
        </div>
      </header>

      <nav className="flex h-6 shrink-0 items-center gap-3.5 border-b border-[#dad8d6] px-[7px] text-xs">
        {menus.map((m) => (
          <button key={m}>{m}</button>
        ))}
      </nav>

      <div className="flex h-[42px] shrink-0 items-center pl-0.5">
        <ToolGroup icons={selectIcons} name="Select" />
        <VLine />
        <ToolGroup icons={turnIcons} name="Transform" />
        <VLine />
        <ToolGroup icons={raiseIcons} name="Order" />
        <VLine />
        <div className="flex items-center gap-[7px] pl-1">
          <Spin id="x" label="X:" value="1248.335" wide />
          <Spin id="y" label="Y:" value="1431.026" wide />
          <Spin id="w" label="W:" value="375.000" />
        </div>
        <button aria-label="Lock ratio" className="flex w-11 justify-center">
          <Padlock open />
        </button>
        <Spin id="h" label="H:" value="659.826" />
        <div className="relative ml-1">
          <select
            aria-label="Unit"
            className="h-[34px] w-[60px] appearance-none rounded-[5px] border border-[#cdc7c2] bg-gradient-to-b from-[#f8f7f6] to-[#edebe9] pl-3 text-xs shadow-sm"
          >
            <option>px</option>
          </select>
          <span className="pointer-events-none absolute right-2 top-2">
            <Triangle dir="down" />
          </span>
        </div>
        <VLine />
        <div className="flex gap-px">
          {affectIcons.map((a) => (
            <button
              key={a.name}
              aria-label={a.name}
              aria-pressed="true"
              className="flex h-[34px] w-9 items-center justify-center rounded-[5px] border border-[#cdc7c2] bg-[#d6d1cd]"
            >
              <Icon size={18} box={18}>
                {a.icon}
                <path d="M3 14h9" stroke="#111" strokeWidth="1.400" strokeDasharray="2 1" />
                <path d="M12.500 11l4.500 3-4.500 3z" fill="#111" />
              </Icon>
            </button>
          ))}
        </div>
      </div>

      <main className="flex min-h-0 grow">
        <aside className="flex w-12 shrink-0 flex-col px-[3px] pt-[3px]" aria-label="Tools">
          {tools.map((t, i) =>
            t ? (
              <button
                key={t.name}
                aria-label={t.name}
                className={`flex h-[34px] w-[43px] shrink-0 items-center justify-center rounded-[5px] ${
                  i === 0 ? "border border-[#cdc7c2] bg-[#d6d1cd]" : ""
                }`}
              >
                <Icon>{t.icon}</Icon>
              </button>
            ) : (
              <HLine key={i} />
            ),
          )}
          <button aria-label="More tools" className="mb-[11px] mt-auto flex w-[43px] justify-center">
            <Triangle dir="right" />
          </button>
        </aside>

        <div className="flex min-w-0 grow flex-col pl-[3px]">
          <div className="flex h-[18px] shrink-0">
            <button aria-label="Lock guides" className="flex w-[18px] shrink-0 items-center justify-center rounded-sm bg-[#e8e4e1]">
              <Padlock gold />
            </button>
            <div className="min-w-0 grow">
              <TopRuler />
            </div>
            <button
              aria-label="Display mode"
              className="flex w-[18px] shrink-0 items-center justify-center rounded border border-[#bbb6b2] bg-[#f4f2f1]"
            >
              <Icon size={10} box={10}>
                <path d="M7.500 9.500h-2v-4H3.500A2 2 0 013.500 1h4z" fill="#fff" stroke="#999" />
              </Icon>
            </button>
          </div>
          <div className="flex min-h-0 grow">
            <div className="w-[18px] shrink-0">
              <SideRuler />
            </div>
            <div className="flex min-w-0 grow flex-col">
              <div className="flex min-h-0 grow">
                <div className="relative min-w-0 grow overflow-hidden bg-white">
                  <Artwork />
                </div>
                <div className="flex w-[18px] shrink-0 flex-col items-center bg-[#cdcdcd]">
                  <div className="h-[60%]" />
                  <div className="mt-0.5 h-[184px] w-1.5 rounded-full bg-[#7f8483]" />
                </div>
              </div>
              <div className="flex h-[18px] shrink-0">
                <div className="flex grow items-center bg-[#cdcdcd] pl-[3px]">
                  <div className="h-1.5 w-1/2 rounded-full bg-[#7f8483]" />
                </div>
                <button
                  aria-label="Color managed view"
                  className="flex w-[18px] items-center justify-center rounded border border-[#cdc7c2] bg-[#f6f5f4]"
                >
                  <Icon size={14} box={14}>
                    <path d="M2 1c4 1 8 5 10.500 9L3 13z" fill="#b6e6c4" />
                    <path d="M5 7l7.500 3L3 13z" fill="#f3b7c9" />
                    <path d="M2 7l4 1-3 5z" fill="#b8c7f5" />
                  </Icon>
                </button>
              </div>
            </div>
          </div>
        </div>

        <div className="flex w-[38px] shrink-0 flex-col items-center border-l border-[#d5d0cc] pt-1.5">
          <button className="flex rotate-180 items-center text-xs leading-[18px] whitespace-nowrap [writing-mode:vertical-rl]">
            <svg width="18" height="18" viewBox="0 0 18 18" className="rotate-180" aria-hidden="true">
              <path d="M1.500 1v16" stroke="#d01c1c" strokeWidth="1.300" />
              <path d="M3.500 2h6v3h-6zM3.500 7h13v3h-13zM3.500 13h10v3h-10z" fill="#b9cde4" stroke="#333" />
            </svg>
            Align and Distribute (Shift+Ctrl+A)
          </button>
        </div>

        <div className="flex w-11 shrink-0 flex-col px-1 pt-[3px]" aria-label="Commands" role="toolbar">
          {commands.map((c, i) =>
            c ? (
              <button key={c.name} aria-label={c.name} className="flex h-[35px] shrink-0 items-center justify-center">
                <Icon size={18} box={18}>
                  {c.icon}
                </Icon>
              </button>
            ) : (
              <HLine key={i} />
            ),
          )}
          <button aria-label="More commands" className="mb-[11px] mt-auto flex justify-center">
            <Triangle dir="right" />
          </button>
        </div>

        <div className="flex w-11 shrink-0 flex-col px-1 pt-[3px]" aria-label="Snapping" role="toolbar">
          {snaps.map((s, i) =>
            s ? (
              <button
                key={s.name}
                aria-label={s.name}
                aria-pressed={!!s.on}
                className={`flex h-[35px] shrink-0 items-center justify-center rounded-[5px] ${
                  s.on ? "border border-[#cdc7c2] bg-[#d6d1cd]" : ""
                }`}
              >
                <Icon size={18} box={18}>
                  {s.icon}
                </Icon>
              </button>
            ) : (
              <HLine key={i} />
            ),
          )}
          <button aria-label="More snap options" className="mb-[11px] mt-auto flex justify-center">
            <Triangle dir="right" />
          </button>
        </div>
      </main>

      <div className="flex h-[34px] shrink-0" role="group" aria-label="Palette">
        <button aria-label="No color" className="min-w-0 flex-1 overflow-hidden bg-white">
          <svg width="100%" height="34" viewBox="0 0 110 34" preserveAspectRatio="none" className="block" aria-hidden="true">
            <path d="M0 1l110 32M110 1L0 33" stroke="#6e0000" strokeWidth="4" />
          </svg>
        </button>
        {greys.map((g) => (
          <button key={g} aria-label="Grey swatch" className={`min-w-0 flex-1 ${g}`} />
        ))}
        <button aria-label="Palette menu" className="flex w-9 items-center justify-center">
          <Triangle dir="left" />
        </button>
      </div>

      <div className="flex h-[34px] shrink-0 items-center text-xs">
        <dl className="grid w-[65px] grid-cols-[40px_1fr] pl-px leading-[17px]">
          <dt>Fill:</dt>
          <dd>N/A</dd>
          <dt>Stroke:</dt>
          <dd>N/A</dd>
        </dl>
        <label htmlFor="opacity" className="w-3.5">
          O:
        </label>
        <div className="flex h-[34px] w-[68px] overflow-hidden rounded-[5px] border border-[#cdc7c2] bg-[#faf9f8]">
          <input id="opacity" disabled defaultValue="100" className="w-0 min-w-0 grow bg-transparent pl-0.5 text-[13px] text-[#929595]" />
          <button disabled aria-label="Decrease opacity" className="w-[17px] border-l border-[#e3e1df]">
            <Icon size={16} box={16}>
              <path d="M3 8h10" stroke="#cfcfcd" strokeWidth="1.500" />
            </Icon>
          </button>
          <button disabled aria-label="Increase opacity" className="w-[17px] border-l border-[#e3e1df]">
            <Icon size={16} box={16}>
              <path d="M3 8h10M8 3v10" stroke="#cfcfcd" strokeWidth="1.500" />
            </Icon>
          </button>
        </div>
        <div className="ml-[42px] h-[34px] w-px bg-[#d9d7d5]" />
        <button aria-label="Layer visibility" className="flex w-[38px] justify-center">
          <Icon size={18} box={18}>
            <path d="M1 10c4-5 12-5 16 0-4 5-12 5-16 0z" fill="#fff" stroke="#111" strokeWidth="1.300" />
            <circle cx="9" cy="10" r="3.200" fill="#111" />
            <path d="M2.500 7L1 5M5 5.500L4 3M8 4.500L7.500 2M11 4.500l.5-2.500M14 5.500L15 3M16 7l1.500-2" stroke="#111" strokeWidth="1.200" />
          </Icon>
        </button>
        <button aria-label="Layer lock" className="flex w-[35px] justify-center">
          <Padlock open />
        </button>
        <div className="relative">
          <select
            aria-label="Layer"
            className="h-[34px] w-[79px] appearance-none rounded-[5px] border border-[#cdc7c2] bg-gradient-to-b from-[#f8f7f6] to-[#edebe9] pl-3 text-[10px] font-bold"
          >
            <option>•Layer 1</option>
          </select>
          <span className="pointer-events-none absolute right-2 top-2">
            <Triangle dir="down" />
          </span>
        </div>
        <p className="ml-0.5 min-w-0 grow truncate">
          <b>Alt:</b> click to select under; scroll mouse-wheel to cycle-select; drag to move selected or select by touch
        </p>
        <div className="h-[34px] w-px bg-[#d9d7d5]" />
        <dl className="ml-2.5 grid w-[66px] grid-cols-[16px_1fr] text-[13px] leading-[17px]">
          <dt className="text-xs leading-[17px]">X:</dt>
          <dd className="text-right">-514.58</dd>
          <dt className="text-xs leading-[17px]">Y:</dt>
          <dd className="text-right">1850.52</dd>
        </dl>
        <div className="ml-2.5 mr-2.5 flex gap-[11px]">
          <ZoomSpin id="zoom" label="Z:" value="71%" width="w-[94px]" />
          <ZoomSpin id="rotation" label="R:" value="0.00°" width="w-[101px]" />
        </div>
      </div>

      <TaskBar />
    </div>
  );
}
